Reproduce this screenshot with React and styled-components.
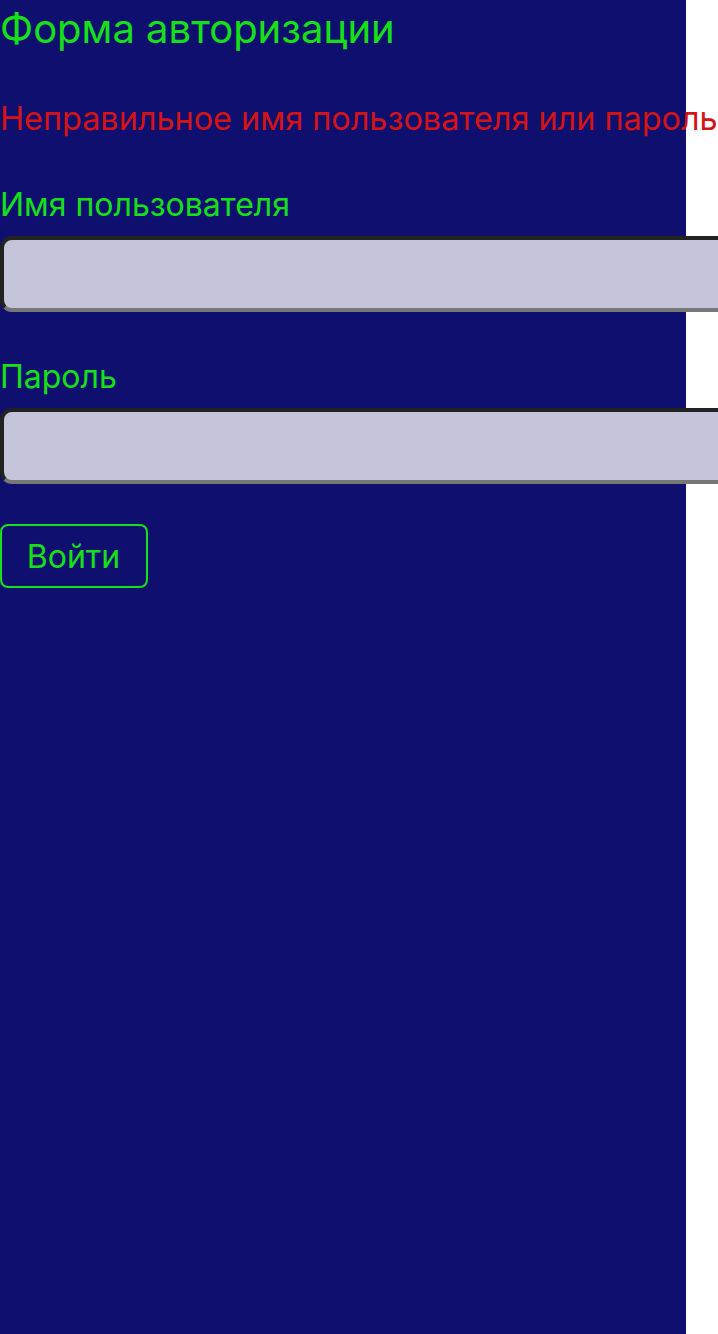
import styled, { createGlobalStyle } from 'styled-components';

const GlobalStyle = createGlobalStyle`
  body {
    margin: 0;
    background: #ffffff;
    overflow: hidden;
  }
`;

const Page = styled.main`
  width: 686px;
  min-height: 100vh;
  background: #0f0f70;
  font-family: Inter, 'Noto Sans', sans-serif;
  color: #17e017;
`;

const Title = styled.h1`
  margin: 0;
  font-size: 40px;
  font-weight: 400;
  line-height: 58px;
`;

const ErrorText = styled.p`
  margin: 41px 0 0;
  font-size: 32.4px;
  line-height: 40px;
  color: #d41414;
  white-space: nowrap;
`;

const Form = styled.form`
  display: flex;
  flex-direction: column;
  align-items: flex-start;
`;

const Field = styled.div`
  display: flex;
  flex-direction: column;
  gap: 11px;
  margin-top: ${(p) => p.$top}px;
`;

const Label = styled.label`
  font-size: 32px;
  line-height: 40px;
`;

const Input = styled.input`
  box-sizing: border-box;
  width: 760px;
  height: 76px;
  border: 4px solid;
  border-color: #222222 #777777 #777777 #222222;
  border-radius: 12px;
  background: #c4c5da;
  font-size: 28px;
  font-family: inherit;
  outline: none;
`;

const Button = styled.button`
  margin-top: 40px;
  height: 64px;
  padding: 0 25px 0 24px;
  width: 148px;
  border: 2px solid #17e017;
  border-radius: 8px;
  background: transparent;
  color: #17e017;
  font-family: inherit;
  font-size: 32px;
`;

export default function App() {
  return (
    <>
      <GlobalStyle />
      <Page>
        <Title>Форма авторизации</Title>
        <ErrorText>Неправильное имя пользователя или пароль</ErrorText>
        <Form onSubmit={(e) => e.preventDefault()}>
          <Field $top={46}>
            <Label htmlFor="username">Имя пользователя</Label>
            <Input id="username" type="text" />
          </Field>
          <Field $top={45}>
            <Label htmlFor="password">Пароль</Label>
            <Input id="password" type="password" />
          </Field>
          <Button type="submit">Войти</Button>
        </Form>
      </Page>
    </>
  );
}
